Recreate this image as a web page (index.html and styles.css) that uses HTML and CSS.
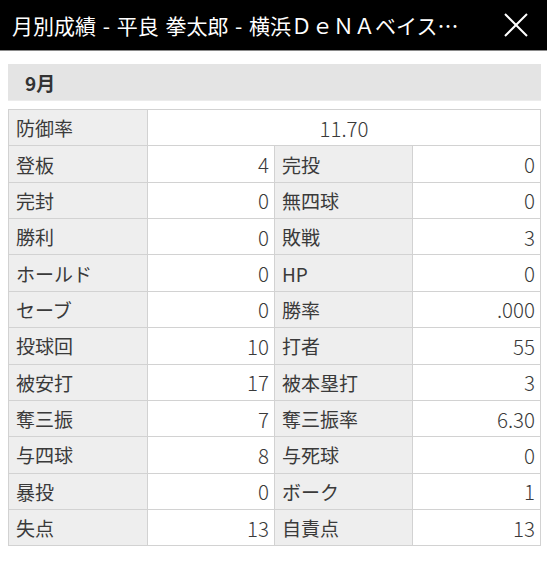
FILE: index.html
```html
<!DOCTYPE html>
<html lang="ja">
<head>
<meta charset="utf-8">
<title>月別成績</title>
<link rel="stylesheet" href="styles.css">
</head>
<body>
<header class="topbar">
  <h1 class="title">月別成績 - 平良 拳太郎 - 横浜ＤｅＮＡベイス⋯</h1>
  <button class="close" aria-label="閉じる">
    <svg width="26" height="26" viewBox="0 0 26 26"><path d="M2 2 L24 24 M24 2 L2 24" stroke="#fff" stroke-width="2" fill="none"/></svg>
  </button>
</header>
<main class="content">
  <div class="month">9月</div>
  <div class="stats">
    <div class="lbl">防御率</div><div class="val wide">11.70</div>
    <div class="lbl">登板</div><div class="val">4</div><div class="lbl">完投</div><div class="val">0</div>
    <div class="lbl">完封</div><div class="val">0</div><div class="lbl">無四球</div><div class="val">0</div>
    <div class="lbl">勝利</div><div class="val">0</div><div class="lbl">敗戦</div><div class="val">3</div>
    <div class="lbl">ホールド</div><div class="val">0</div><div class="lbl">HP</div><div class="val">0</div>
    <div class="lbl">セーブ</div><div class="val">0</div><div class="lbl">勝率</div><div class="val">.000</div>
    <div class="lbl">投球回</div><div class="val">10</div><div class="lbl">打者</div><div class="val">55</div>
    <div class="lbl">被安打</div><div class="val">17</div><div class="lbl">被本塁打</div><div class="val">3</div>
    <div class="lbl">奪三振</div><div class="val">7</div><div class="lbl">奪三振率</div><div class="val">6.30</div>
    <div class="lbl">与四球</div><div class="val">8</div><div class="lbl">与死球</div><div class="val">0</div>
    <div class="lbl">暴投</div><div class="val">0</div><div class="lbl">ボーク</div><div class="val">1</div>
    <div class="lbl">失点</div><div class="val">13</div><div class="lbl">自責点</div><div class="val">13</div>
  </div>
</main>
</body>
</html>
```
FILE: styles.css
```css
html, body {
  margin: 0;
  padding: 0;
  background: #fff;
}
body {
  font-family: "Noto Sans CJK JP", "Noto Sans", sans-serif;
  color: #333;
}
.topbar {
  height: 50px;
  background: #000;
  border-bottom: 1px solid #8a8a8a;
  display: flex;
  align-items: center;
  padding: 0 18px 0 12px;
}
.title {
  margin: 0;
  font-size: 21px;
  font-weight: 400;
  color: #fff;
  white-space: nowrap;
  line-height: 30px;
  word-spacing: 2px;
}
.close {
  margin-left: auto;
  background: none;
  border: 0;
  padding: 0;
  width: 26px;
  height: 26px;
  display: flex;
}
.content {
  padding: 13px 6px 0 8px;
}
.month {
  height: 36px;
  background: #e4e4e4;
  border-bottom: 1px solid #ececec;
  font-size: 19px;
  font-weight: 700;
  color: #333;
  display: flex;
  align-items: center;
  padding-left: 17px;
  width: 516px;
}
.stats {
  margin-top: 8px;
  width: 531px;
  display: grid;
  grid-template-columns: 138px 126px 137px 127px;
  grid-auto-rows: 35.36px;
  gap: 1px;
  background: #d2d2d2;
  border: 1px solid #d2d2d2;
  font-size: 19px;
}
.lbl, .val {
  display: flex;
  align-items: center;
  color: #3a3a3a;
}
.lbl {
  background: #eeeeee;
  padding-left: 7px;
}
.val {
  background: #fff;
  justify-content: flex-end;
  padding-right: 5px;
  font-weight: 300;
  font-size: 20.5px;
}
.val.wide {
  grid-column: 2 / 5;
  justify-content: center;
  padding-right: 0;
}
```
